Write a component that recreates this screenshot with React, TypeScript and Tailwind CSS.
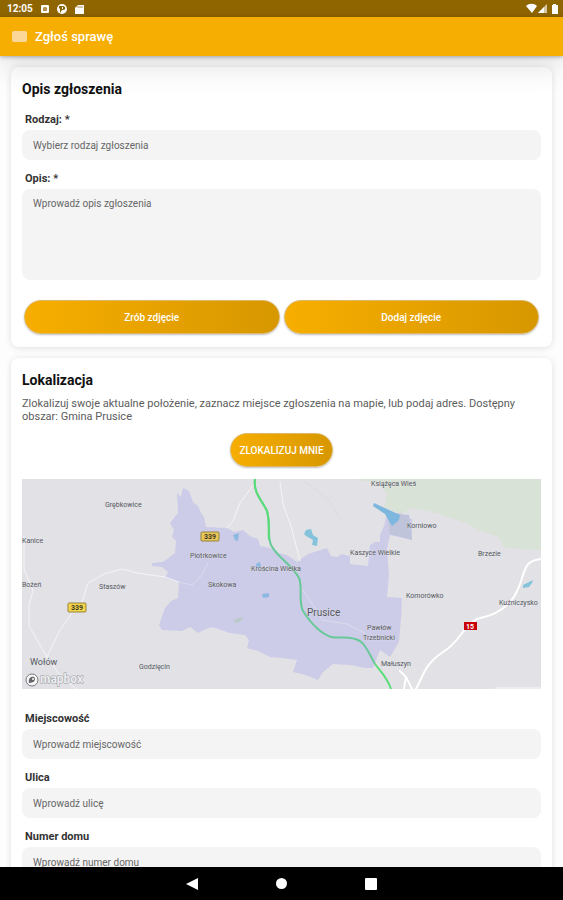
import type { ReactNode } from "react";

const FIELD =
  "block w-full appearance-none rounded-lg bg-[#f4f4f4] px-[11px] text-[10px] text-[#666] outline-none placeholder:text-[#666] placeholder:opacity-100";
const PILL =
  "h-[34px] rounded-full border border-[#dcb868] bg-linear-to-r from-[#f7ae00] to-[#d79700] text-[10px] font-medium text-white shadow-[0_1px_2px_rgba(0,0,0,0.25)]";

function Card({ title, children }: { title: string; children: ReactNode }) {
  return (
    <section className="rounded-lg bg-white px-[11px] pt-3 pb-[13px] shadow-[0_1px_7px_rgba(0,0,0,0.12)]">
      <h2 className="text-[14px] leading-5 font-bold text-[#111]">{title}</h2>
      {children}
    </section>
  );
}

function Label({ htmlFor, children }: { htmlFor: string; children: ReactNode }) {
  return (
    <label htmlFor={htmlFor} className="block px-[3px] pb-[2px] text-[11px] leading-4 font-bold text-[#333]">
      {children}
    </label>
  );
}

function InputField({ id, label, placeholder }: { id: string; label: string; placeholder: string }) {
  return (
    <div className="pb-[11px]">
      <Label htmlFor={id}>{label}</Label>
      <input id={id} type="text" placeholder={placeholder} className={`${FIELD} h-[30px]`} />
    </div>
  );
}

const places = [
  { x: 83, y: 28, name: "Grębkowice" },
  { x: 0, y: 64, name: "Kanice" },
  { x: 0, y: 108, name: "Bożeń" },
  { x: 77, y: 110, name: "Staszów" },
  { x: 117, y: 190, name: "Godzięcin" },
  { x: 168, y: 79, name: "Piotrkowice" },
  { x: 186, y: 108, name: "Skokowa" },
  { x: 229, y: 92, name: "Krościna Wielka" },
  { x: 349, y: 7, name: "Książęca Wieś" },
  { x: 328, y: 76, name: "Kaszyce Wielkie" },
  { x: 385, y: 49, name: "Korniowo" },
  { x: 456, y: 77, name: "Brzezie" },
  { x: 384, y: 119, name: "Komorówko" },
  { x: 477, y: 126, name: "Kuźniczysko" },
  { x: 345, y: 151, name: "Pawłów" },
  { x: 341, y: 161, name: "Trzebnicki" },
  { x: 359, y: 187, name: "Małuszyn" },
];

function RegionMap() {
  return (
    <svg
      viewBox="0 0 519 210"
      preserveAspectRatio="xMidYMid slice"
      className="block w-full"
      role="img"
      aria-label="Mapa gminy Prusice"
    >
      <rect width="519" height="210" fill="#e2e2e6" />
      <path d="M330 0H519V71L497 70L482 68L477 58L458 52L447 45L415 34L390 29L378 35L362 28L365 15L357 4Z" fill="#d9e2d6" />
      <path
        d="M155 14L159 18L161 9L167 12L171 23L176 27L179 34L182 38L184 48L205 49L212 53L221 51L228 57L236 60L238 67L248 69L256 74L265 76L275 83L286 75L305 69L309 77L315 78L320 75L328 77L328 85L346 87L348 66L353 63L358 63V56L362 47L365 34L378 34L390 40V61L368 56L365 70L367 95L365 118L380 119L379 139L377 163L368 178L358 171L351 189L343 189L329 186L311 185L301 193L296 201L284 196L271 193L275 181L260 179L248 178L236 172L225 169L227 161L223 156L208 154L190 148L184 150L176 154L168 148L160 152L140 151L137 146L143 129L149 122L156 119L157 104L150 101L143 99L146 93L140 88L130 87V84L141 83L153 74L154 62L150 58L152 51L148 44L156 34Z"
        fill="#cccbe8"
      />
      <path d="M365 34L387 36L390 61L368 55Z" fill="#bfc4da" />
      <g fill="none" stroke="#f5f5f7" strokeLinecap="round" strokeLinejoin="round">
        <path strokeWidth="1" d="M25 178L38 151L50 134L59 126L66 104L82 95L100 90L115 94L143 98L157 103" />
        <path strokeWidth="1" stroke="#dddced" d="M157 103L170 106L180 96L186 84" />
        <path strokeWidth="1" d="M25 178L7 147V126L11 112L2 90V58M25 178L37 195L54 210" />
        <path strokeWidth="1" d="M230 8L218 24L211 42L205 49M258 3L261 25L269 47L278 82" />
        <path strokeWidth="1" stroke="#dddced" d="M280 110L291 126L300 141L325 145L343 154" />
        <path strokeWidth="1" stroke="#dadae1" d="M282 2L307 21L317 38" />
        <path strokeWidth="2" stroke="#fff" d="M519 80C500 82 504 93 496 110C488 130 471 137 455 140C440 148 438 163 421 173C403 185 402 195 394 210" />
        <path strokeWidth="2" stroke="#fff" d="M378 192L384 198L382 210M384 198L390 210" />
      </g>
      <path d="M352 24L378 36L377 41L370 47L363 35L351 27Z" fill="#7db7dd" />
      <path d="M211 56L217 54L216 62L213 61ZM240 115L247 114V118L241 119ZM234 85L238 83L239 88H234Z" fill="#8db8e2" />
      <path d="M284 51L289 50L291 56L296 59L295 67L290 66L291 61L284 57L282 55ZM501 106L511 101L510 104L507 108L501 109Z" fill="#85c3dc" />
      <path d="M211 142L216 139L221 138L219 142L214 144Z" fill="#b9cbc9" />
      <path
        d="M233 0C231 14 240 21 245 32C249 47 245 57 249 66C255 78 270 86 277 99C281 108 276 122 281 132C288 143 298 154 309 158C320 160 327 156 338 162C344 166 348 176 353 185"
        fill="none"
        stroke="#67c997"
        strokeWidth="2"
      />
      <path d="M233 0C231 14 240 21 245 32C248 43 246 52 247 61M353 185C358 192 365 198 369 210" fill="none" stroke="#5add78" strokeWidth="2" />
      <g fontFamily="Roboto, sans-serif" fontSize="7" fill="#555861" stroke="#e2e2e6" strokeOpacity="0.5" strokeWidth="1" paintOrder="stroke">
        {places.map((place) => (
          <text key={place.name} x={place.x} y={place.y}>
            {place.name}
          </text>
        ))}
        <text x="285" y="137" fontSize="10">Prusice</text>
        <text x="8" y="186" fontSize="9">Wołów</text>
      </g>
      <g fontFamily="Roboto, sans-serif" fontSize="7" fontWeight="700" textAnchor="middle">
        <rect x="46" y="124" width="18" height="9" rx="1" fill="#f4d64b" stroke="#96833a" />
        <text x="55" y="131" fill="#3e391f">339</text>
        <rect x="179" y="53" width="18" height="9" rx="1" fill="#e8c65a" stroke="#96833a" />
        <text x="188" y="60" fill="#3e391f">339</text>
        <rect x="442" y="143" width="13" height="8" fill="#c70009" />
        <text x="448" y="150" fill="#fff">15</text>
      </g>
      <circle cx="10" cy="201" r="6" fill="#f8f8f8" stroke="#77777b" />
      <path d="M7 204C6 199 9 197 12 198C14 200 13 204 7 204Z" fill="#66666b" />
      <circle cx="11" cy="200" r="1" fill="#fff" />
      <text x="18" y="204" fontFamily="Roboto, sans-serif" fontSize="12" fontWeight="700" fill="#ededf0" stroke="#98989c" strokeWidth="1" paintOrder="stroke">
        mapbox
      </text>
      <path d="M473 208H519V210H473Z" fill="#ededf0" />
    </svg>
  );
}

function StatusBar() {
  return (
    <div className="flex h-[17px] shrink-0 items-center justify-between bg-[#906600] pr-1 pl-[7px] text-white">
      <div className="flex items-center gap-2">
        <span className="text-[10px] leading-4 font-bold">12:05</span>
        <svg width="44" height="12" viewBox="0 0 44 12" aria-hidden="true">
          <rect x="0" y="2" width="8" height="8" rx="1" fill="#fff" />
          <path d="M3 4H5L6 5V8H2V5Z" fill="#b3964f" />
          <circle cx="21" cy="6" r="5" fill="#fff" />
          <path d="M18 3H22C25 3 25 7 22 7H21L19 10V6L18 5ZM21 4V6H22V4Z" fill="#906600" />
          <path d="M37 2H43V11H34V5Z" fill="#fff" />
          <path d="M37 3V5M39 3V5M41 3V5" stroke="#906600" strokeWidth="0.7" />
        </svg>
      </div>
      <svg width="33" height="12" viewBox="0 0 33 12" aria-hidden="true">
        <path d="M0 3C3 0 8 0 11 3L6 10Z" fill="#fff" />
        <path d="M12 10L21 1V10Z" fill="#d9cba9" />
        <path d="M12 10L18 4V10Z" fill="#fff" />
        <path d="M26 2H27V1H30V2H32V11H26Z" fill="#fff" />
      </svg>
    </div>
  );
}

export default function App() {
  return (
    <div className="flex h-screen flex-col overflow-hidden bg-[#fdfdfd] font-[Roboto,sans-serif]">
      <StatusBar />
      <header className="z-10 flex h-[39px] shrink-0 items-center gap-2 bg-[#f6ae02] px-3 text-white shadow-[0_1px_4px_rgba(0,0,0,0.3),0_10px_30px_rgba(0,0,0,0.12)]">
        <button type="button" aria-label="Menu" className="h-[11px] w-[15px] rounded-[2px] bg-[#fbd79a]" />
        <h1 className="text-[13px] leading-5 font-medium">Zgłoś sprawę</h1>
      </header>

      <main className="flex min-h-0 flex-1 flex-col overflow-hidden">
        <form className="flex flex-col gap-[11px] p-[11px]">
          <Card title="Opis zgłoszenia">
            <div className="pt-[13px] pb-[11px]">
              <Label htmlFor="kind">Rodzaj: *</Label>
              <select id="kind" defaultValue="" className={`${FIELD} h-[30px]`}>
                <option value="">Wybierz rodzaj zgłoszenia</option>
              </select>
            </div>
            <Label htmlFor="description">Opis: *</Label>
            <textarea
              id="description"
              placeholder="Wprowadź opis zgłoszenia"
              className={`${FIELD} h-[91px] resize-none py-2 leading-[14px]`}
            />
            <div className="grid grid-cols-2 gap-1 px-[2px] pt-5">
              <button type="button" className={PILL}>Zrób zdjęcie</button>
              <button type="button" className={PILL}>Dodaj zdjęcie</button>
            </div>
          </Card>

          <Card title="Lokalizacja">
            <p className="pt-[7px] text-[11px] leading-[13px] text-[#5c5c5c]">
              Zlokalizuj swoje aktualne położenie, zaznacz miejsce zgłoszenia na mapie, lub podaj adres. Dostępny
              obszar: Gmina Prusice
            </p>
            <div className="flex justify-center pt-[10px] pb-3">
              <button type="button" className={`${PILL} px-2`}>ZLOKALIZUJ MNIE</button>
            </div>
            <RegionMap />
            <div className="pt-[22px]">
              <InputField id="town" label="Miejscowość" placeholder="Wprowadź miejscowość" />
              <InputField id="street" label="Ulica" placeholder="Wprowadź ulicę" />
              <InputField id="house" label="Numer domu" placeholder="Wprowadź numer domu" />
            </div>
          </Card>
        </form>
      </main>

      <nav className="flex h-[33px] shrink-0 items-center justify-center gap-[78px] bg-black" aria-label="System">
        <button type="button" aria-label="Wstecz">
          <svg width="12" height="14" viewBox="0 0 12 14" className="block">
            <path d="M0 7L12 1V13Z" fill="#fff" />
          </svg>
        </button>
        <button type="button" aria-label="Ekran główny" className="size-[11px] rounded-full bg-white" />
        <button type="button" aria-label="Ostatnie" className="size-3 rounded-[1px] bg-white" />
      </nav>
    </div>
  );
}
